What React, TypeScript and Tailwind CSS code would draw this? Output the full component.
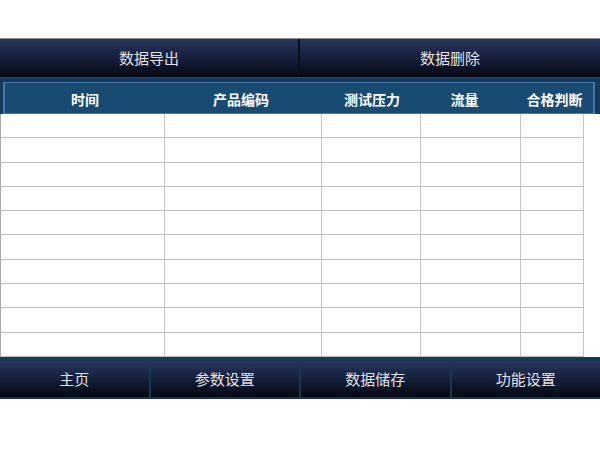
import React from "react";

const font = { fontFamily: '"Noto Sans CJK SC", "Noto Sans", sans-serif' };

const colW = ["w-[164px]", "w-[157px]", "w-[99px]", "w-[100px]", "w-[63px]"];

export default function App() {
  const rows = Array.from({ length: 10 });
  return (
    <div className="w-[600px] h-[450px] bg-white flex flex-col" style={font}>
      <div className="h-[38px] shrink-0" />
      {/* top bar */}
      <div className="h-[39px] shrink-0 border-t border-[#8c8c8c] flex">
        <div className="w-[298px] flex items-center justify-center bg-gradient-to-b from-[#28355e] via-[#151f3c] to-[#050912] text-[#e2e2e2] text-[15px]">
          数据导出
        </div>
        <div className="w-[2px] bg-[#0a1020]" />
        <div className="flex-1 flex items-center justify-center bg-gradient-to-b from-[#28355e] via-[#151f3c] to-[#050912] text-[#e2e2e2] text-[15px]">
          数据删除
        </div>
      </div>
      {/* strip */}
      <div className="h-[5px] shrink-0 bg-[#163859] border-t border-[#1f4a6e]" />
      {/* header */}
      <div className="h-[32px] shrink-0 bg-[#163859] pl-[3px] pr-[5px] flex">
        <div className="flex-1 flex border-2 border-[#4578a8] border-t border-b bg-[#194a72] text-white font-bold text-[14px] pt-[2px]">
          <div className="w-[160px] flex items-center justify-center">时间</div>
          <div className="w-[152px] flex items-center justify-center">产品编码</div>
          <div className="w-[110px] flex items-center justify-center">测试压力</div>
          <div className="w-[75px] flex items-center justify-center">流量</div>
          <div className="flex-1 flex items-center justify-center pl-[14px]">合格判断</div>
        </div>
      </div>
      {/* table */}
      <div className="h-[243px] shrink-0 flex flex-col w-[584px] border-l border-[#a8a8a8]">
        {rows.map((_, i) => (
          <div key={i} className="flex-1 flex border-b border-[#bdbdbd]">
            {colW.map((w, j) => (
              <div key={j} className={`${w} border-r border-[#c4c4c4]`} />
            ))}
          </div>
        ))}
      </div>
      {/* bottom strip */}
      <div className="h-[4px] shrink-0 bg-[#163859]" />
      {/* bottom bar */}
      <div className="h-[38px] shrink-0 flex border-b-2 border-[#1b3050]">
        {["主页", "参数设置", "数据储存", "功能设置"].map((t, i) => (
          <React.Fragment key={t}>
            {i > 0 && <div className="w-[2px] bg-[#1a3550]" />}
            <div className="flex-1 flex items-center justify-center bg-gradient-to-b from-[#28355e] via-[#151f3c] to-[#050912] text-[#e2e2e2] text-[15px]">
              {t}
            </div>
          </React.Fragment>
        ))}
      </div>
    </div>
  );
}
